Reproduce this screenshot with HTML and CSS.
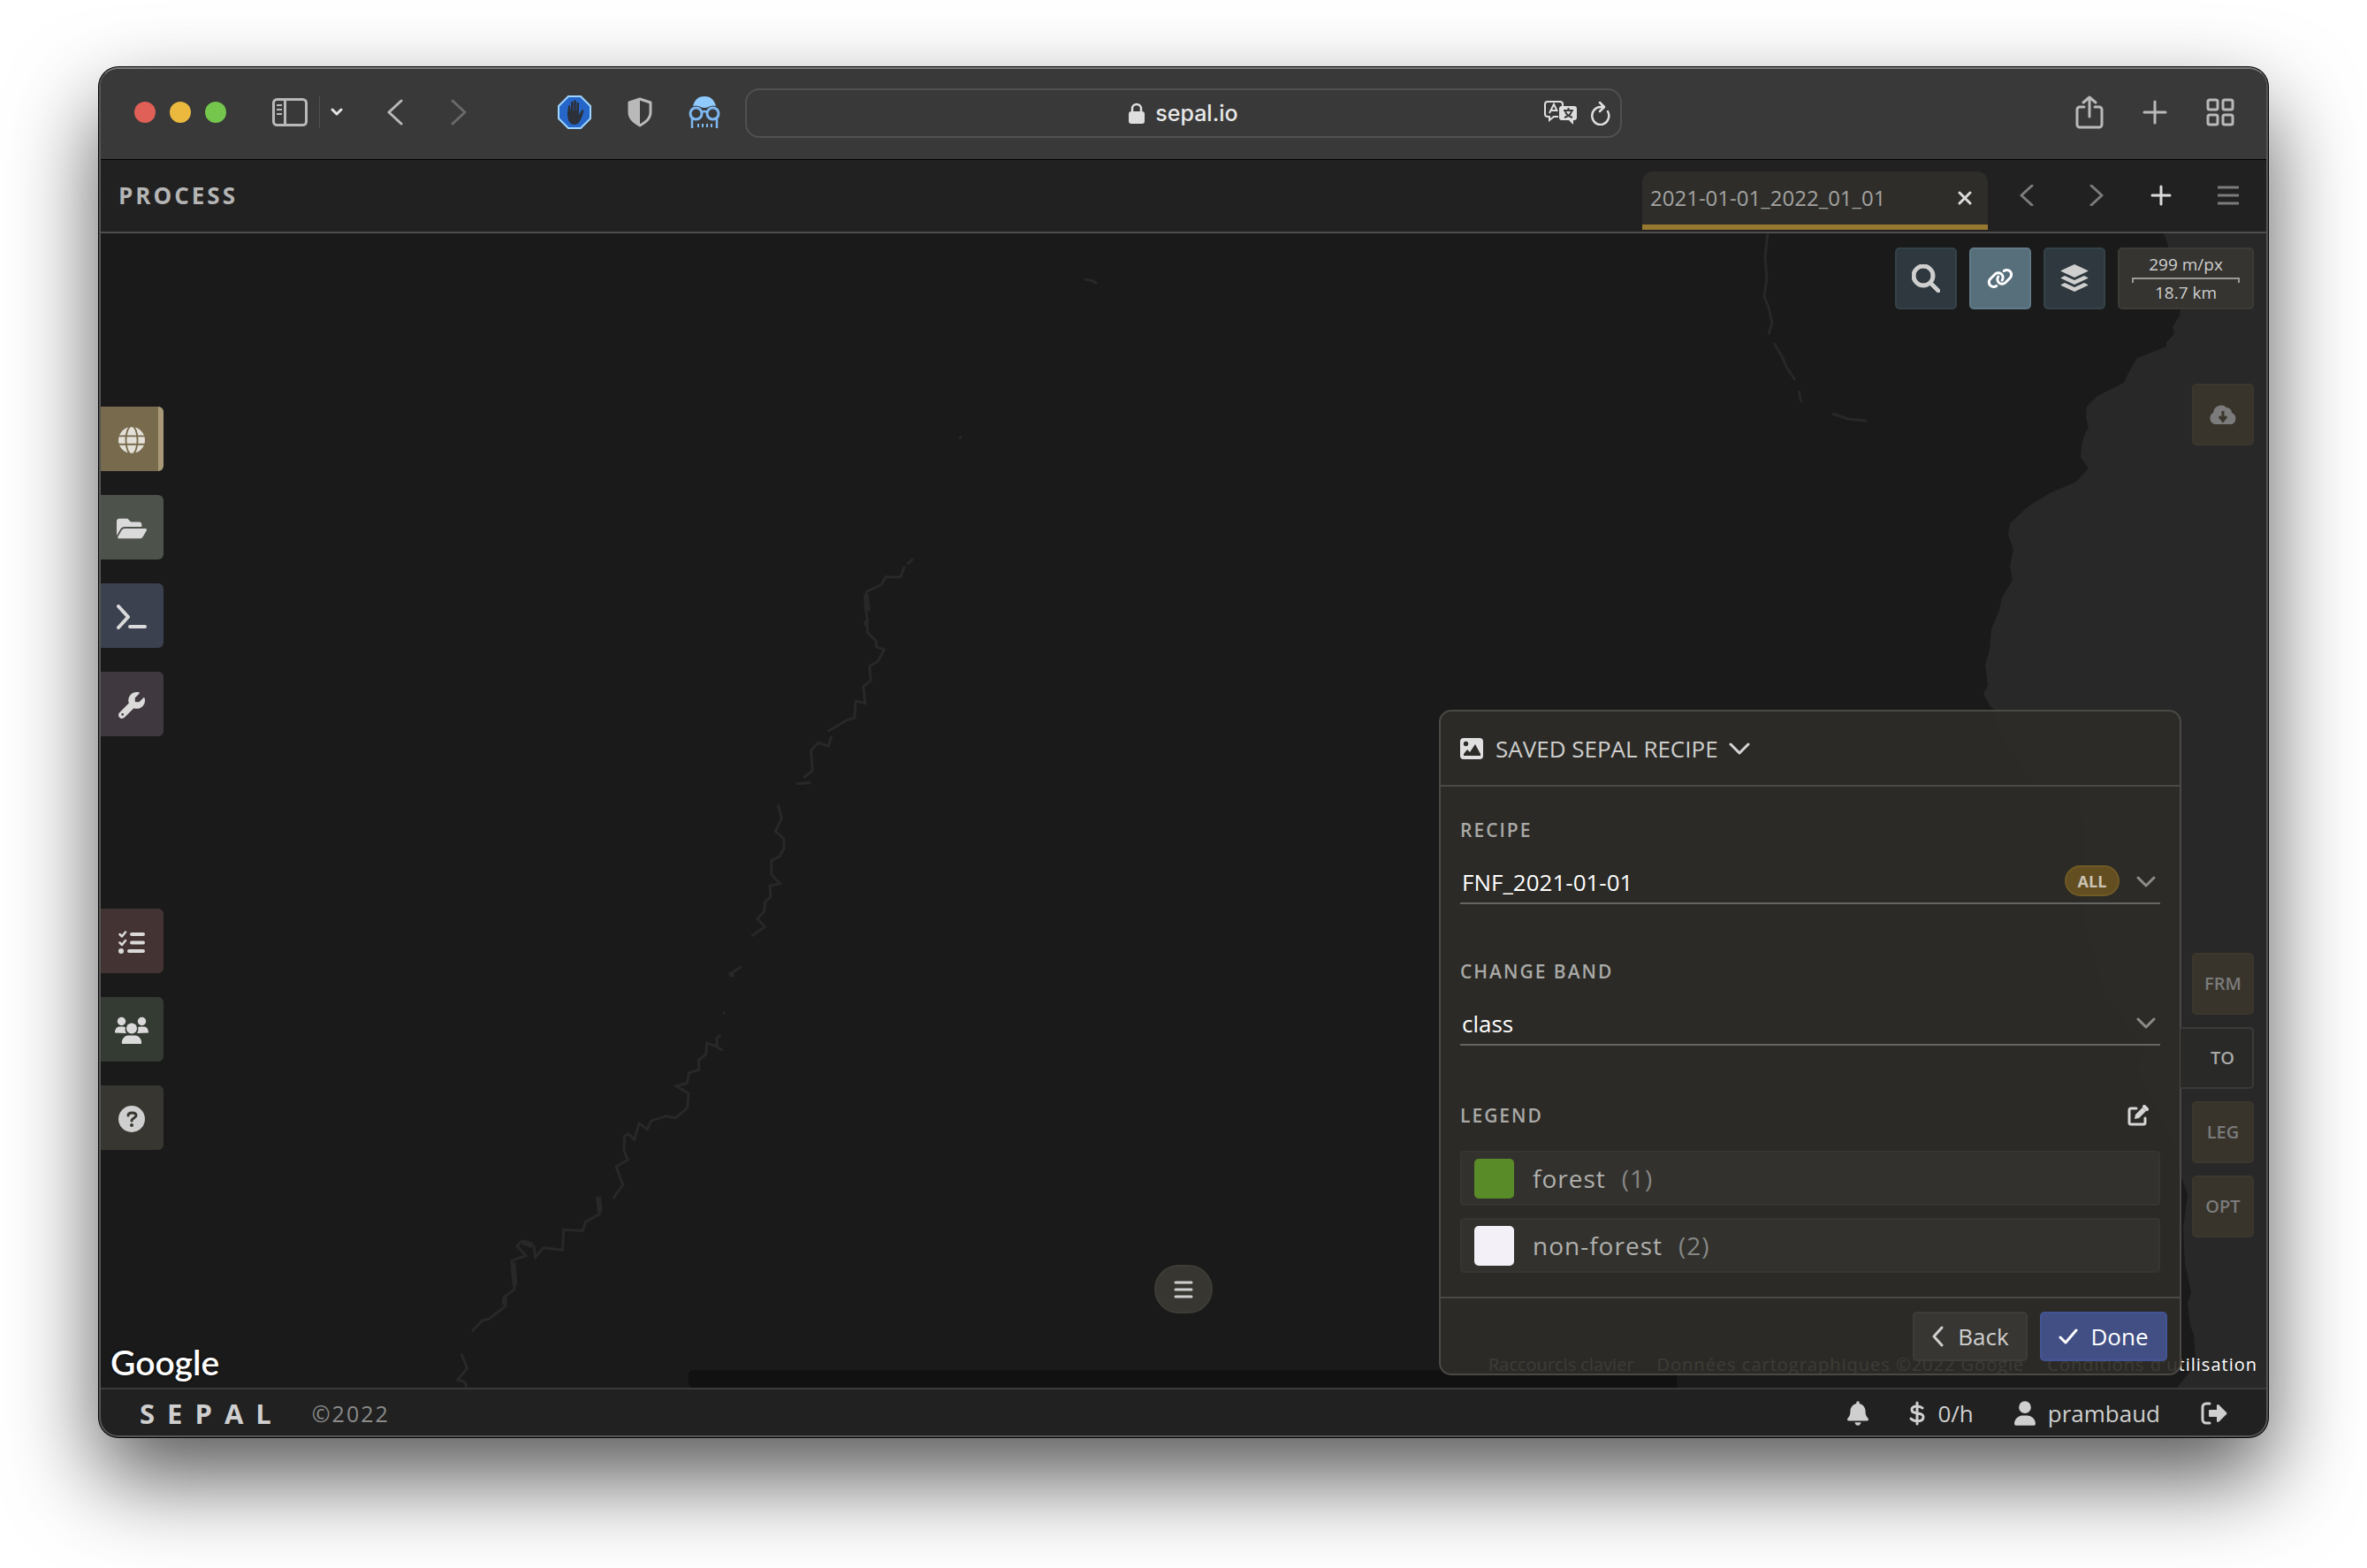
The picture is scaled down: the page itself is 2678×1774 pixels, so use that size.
FILE: index.html
```html
<!DOCTYPE html>
<html lang="fr">
<head>
<meta charset="utf-8">
<meta name="viewport" content="width=device-width, initial-scale=1">
<title>SEPAL</title>
<link rel="stylesheet" href="styles.css">
</head>
<body>
<div class="window">
  <header class="toolbar">
    <div class="toolbar-side">
      <div class="lights"><i class="light red"></i><i class="light yellow"></i><i class="light green"></i></div>
      <button class="plain sidebar-toggle" aria-label="Sidebar"><svg width="40" height="32" viewBox="0 0 40 32" fill="none" stroke="#b9b9b9" stroke-width="3"><rect x="1.500" y="1.500" width="37" height="29" rx="4"/><path d="M14.500 2v28"/><path d="M5 8h6M5 13h6M5 18h6" stroke-width="2"/></svg></button>
      <button class="plain sidebar-menu" aria-label="Sidebar menu"><svg width="14" height="10" viewBox="0 0 14 10" fill="none" stroke="#e4e4e4" stroke-width="3" stroke-linecap="round" stroke-linejoin="round"><path d="M2 2l5 5 5-5"/></svg></button>
      <button class="plain back" aria-label="Back"><svg width="18" height="30" viewBox="0 0 18 30" fill="none" stroke="#b9b9b9" stroke-width="3" stroke-linecap="round" stroke-linejoin="round"><path d="M16 2L2 15l14 13"/></svg></button>
      <button class="plain forward" aria-label="Forward"><svg width="18" height="30" viewBox="0 0 18 30" fill="none" stroke="#6a6a6a" stroke-width="3" stroke-linecap="round" stroke-linejoin="round"><path d="M2 2l14 13L2 28"/></svg></button>
      <button class="plain ext" aria-label="Ad blocker"><svg width="38" height="38" viewBox="0 0 38 38"><path d="M12 1h14l11 11v14L26 37H12L1 26V12z" fill="#2566c8" stroke="#9fd6ff" stroke-width="2"/><path d="M11 20l1-8a1 1 0 0 1 2 0l1 6V8a1.300 1.300 0 0 1 2.600 0v9h.6V6.500a1.300 1.300 0 0 1 2.600 0V17h.6V9a1.300 1.300 0 0 1 2.600 0v13l3-5a1.200 1.200 0 0 1 2.300 1c-2 6-4 15-10 15-6 0-8.300-5-8.300-13z" fill="#2c3038"/></svg></button>
      <button class="plain ext" aria-label="Privacy shield"><svg width="30" height="34" viewBox="0 0 30 34"><path d="M15 2l12 4v11c0 8-7 12-12 15C10 29 3 25 3 17V6z" fill="none" stroke="#b9b9b9" stroke-width="3" stroke-linejoin="round"/><path d="M15 2v30C10 29 3 25 3 17V6z" fill="#b9b9b9"/></svg></button>
      <button class="plain ext" aria-label="Spectacles"><svg width="36" height="38" viewBox="0 0 36 38" fill="none" stroke="#7db8f2" stroke-width="3"><path d="M5 12C7 4 12 1 18 1s11 3 13 11c-6-2-8 2-13 2s-7-4-13-2z" fill="#8fcbff" stroke="none"/><circle cx="8.500" cy="20.500" r="6.500"/><circle cx="27.500" cy="20.500" r="6.500"/><path d="M15 19q3-2 6 0M4 25v12M32 25v12" stroke-width="2.500"/><path d="M10 34h17" stroke-width="4" stroke-dasharray="2 3"/></svg></button>
    </div>
    <div class="address">
      <svg width="18" height="24" viewBox="0 0 18 24"><rect y="10" width="18" height="14" rx="3" fill="#dedede"/><path d="M4 11V7a5 5 0 0 1 10 0v4" fill="none" stroke="#dedede" stroke-width="2.500"/></svg>
      <span>sepal.io</span>
      <div class="address-tools">
        <button class="plain" aria-label="Translate"><svg width="38" height="28" viewBox="0 0 38 28" fill="none" stroke="#dedede" stroke-width="2"><path d="M16 18H11l-5 4v-4H4a3 3 0 0 1-3-3V4a3 3 0 0 1 3-3h14a3 3 0 0 1 3 3v2"/><path d="M6 14l5-10 4 8M8 11h6"/><path d="M20 6h14a3 3 0 0 1 3 3v10a3 3 0 0 1-3 3h-1v5l-5-5h-8a3 3 0 0 1-3-3V9a3 3 0 0 1 3-3z" fill="#dedede" stroke="none"/><path d="M22 11h11M27.500 8v3M24 12c1 4 5 6 8 7M31 12c-1 4-5 6-8 7" stroke="#393939"/></svg></button>
        <button class="plain" aria-label="Reload"><svg width="24" height="28" viewBox="0 0 24 28" fill="none" stroke="#dedede" stroke-width="2.500" stroke-linecap="round" stroke-linejoin="round"><path d="M20 12a9.500 10 0 1 1-8-5h3M11 2l5 5-5 5"/></svg></button>
      </div>
    </div>
    <div class="toolbar-side right">
      <button class="plain" aria-label="Share"><svg width="32" height="38" viewBox="0 0 32 38" fill="none" stroke="#b9b9b9" stroke-width="3" stroke-linecap="round" stroke-linejoin="round"><path d="M10 13H5a3 3 0 0 0-3 3v17a3 3 0 0 0 3 3h22a3 3 0 0 0 3-3V16a3 3 0 0 0-3-3h-5M16 24V2M9 8l7-6 7 6"/></svg></button>
      <button class="plain" aria-label="New tab"><svg width="28" height="28" viewBox="0 0 28 28" stroke="#b9b9b9" stroke-width="3" stroke-linecap="round"><path d="M14 2v24M2 14h24"/></svg></button>
      <button class="plain" aria-label="Tab overview"><svg width="32" height="32" viewBox="0 0 32 32" fill="none" stroke="#b9b9b9" stroke-width="3"><rect x="2" y="2" width="11" height="11" rx="2"/><rect x="19" y="2" width="11" height="11" rx="2"/><rect x="2" y="19" width="11" height="11" rx="2"/><rect x="19" y="19" width="11" height="11" rx="2"/></svg></button>
    </div>
  </header>

  <div class="process-bar">
    <h1 class="process-title">PROCESS</h1>
    <div class="tab"><span>2021-01-01_2022_01_01</span><button class="plain" aria-label="Close tab"><svg width="16" height="16" viewBox="0 0 16 16" stroke="#dcdcdc" stroke-width="3" stroke-linecap="round"><path d="M2 2l12 12M14 2L2 14"/></svg></button></div>
    <div class="tab-tools">
      <button class="plain" aria-label="Previous"><svg width="24" height="24" viewBox="0 0 24 24" fill="none" stroke="#7b7b7b" stroke-width="3" stroke-linecap="round" stroke-linejoin="round"><path d="M18 1L6 12l12 11"/></svg></button>
      <button class="plain" aria-label="Next"><svg width="24" height="24" viewBox="0 0 24 24" fill="none" stroke="#7b7b7b" stroke-width="3" stroke-linecap="round" stroke-linejoin="round"><path d="M9 1l12 11L9 23"/></svg></button>
      <button class="plain" aria-label="Add"><svg width="24" height="24" viewBox="0 0 24 24" stroke="#dcdcdc" stroke-width="3" stroke-linecap="round"><path d="M12 2v20M2 12h20"/></svg></button>
      <button class="plain" aria-label="Menu"><svg width="24" height="24" viewBox="0 0 24 24" stroke="#7b7b7b" stroke-width="3"><path d="M0 3h24M0 12h24M0 21h24"/></svg></button>
    </div>
  </div>

  <main class="map">
    <svg class="terrain" viewBox="114 264 2451 1306" preserveAspectRatio="xMaxYMax slice" aria-hidden="true">
      <path class="water" d="M2449 264L2454 278 2462 310 2460 330 2468 350 2467 357 2459 370 2461 378 2452 387V392L2419 405 2409 422 2404 433 2374 448 2362 460 2361 472 2364 483 2359 493 2356 503 2355 517 2364 530 2350 545 2320 558 2297 572 2275 592 2273 604 2279 622 2275 640 2278 656 2266 676 2263 690 2254 712 2252 735 2247 752 2250 775 2245 785 2252 798 2257 803V818L2300 885 2352 893 2360 950 2361 1050 2385 1130 2428 1185 2420 1210 2435 1240 2460 1290 2469 1332 2476 1352 2471 1390 2473 1430 2480 1462 2476 1475 2479 1500 2483 1510 2485 1537 2480 1550 2464 1570H2565V264z"/>
      <g class="river" transform="translate(450 580) scale(.4146 .6378)">
        <path d="M1408 82L1392 92M1386 95L1374 114H1334L1322 128 1282 140 1278 165 1284 190V212L1308 228V238L1330 243 1312 264 1290 272 1293 298 1273 308 1278 338 1252 334 1249 364 1228 368 1176 388M1186 396L1178 414 1150 408 1130 422 1134 458 1110 470M1090 481L1130 479M1040 518L1050 542 1033 565 1055 578 1057 595 1044 610 1022 617V642L1046 658 1018 662 1020 682 1005 690 1002 708 984 720 1004 735 968 751M940 805L906 820M890 887H896M884 926L873 932 874 948 890 954M873 947L846 941 844 960 823 972 825 988 797 994 792 1012 762 1017 796 1030 793 1056 760 1074 736 1070 694 1079 683 1094 661 1083 648 1112 632 1102 621 1106 620 1132 630 1148 598 1160 617 1192 590 1217M553 1213L554 1244 515 1258 507 1274 455 1272 452 1308 400 1304 378 1321 374 1302 358 1294 342 1292 328 1301 352 1318 313 1327 323 1360 320 1378 292 1392 296 1408 252 1430 234 1433 205 1452M176 1492L192 1518 166 1538 186 1542 190 1552"/>
        <path class="wide" d="M1280 145L1285 175M1275 196H1284M920 818L908 820M550 1214L554 1240M343 1294L370 1300M317 1330L322 1370M294 1393V1405"/>
      </g>
      <g class="river"><path d="M2001 264L1998 290 2000 315 1997 335 2002 348 2006 365 2002 378M2008 388L2018 405 2022 415 2032 430M2036 442L2039 455M2074 468L2092 474 2113 476M1228 316L1238 318 1242 321M1086 495h3"/></g>
      <path class="relief" d="M780 1556q0-6 6-6H1898V1570H786q-6 0-6-6z"/>
    </svg>

    <nav class="modules" aria-label="Modules">
      <div class="module-group">
        <button class="module process" aria-label="Process"><svg width="30" height="30" viewBox="0 0 32 32"><circle cx="16" cy="16" r="16" fill="#e3e0d8"/><g fill="none" stroke="#786a4c" stroke-width="2"><ellipse cx="16" cy="16" rx="7" ry="17"/><path d="M0 11h32M0 21h32"/></g></svg></button>
        <button class="module browse" aria-label="Files"><svg width="34" height="30" viewBox="0 32 576 448"><path fill="#dadada" d="M572.694 292.093L500.270 416.248A63.997 63.997 0 0 1 444.989 448H45.025c-18.523 0-30.064-20.093-20.731-36.093l72.424-124.155A64 64 0 0 1 152 256h399.964c18.523 0 30.064 20.093 20.730 36.093zM152 224h328v-48c0-26.510-21.490-48-48-48H272l-64-64H48C21.490 64 0 85.490 0 112v278.046l69.077-118.418C86.214 242.250 117.989 224 152 224z"/></svg></button>
        <button class="module terminal" aria-label="Terminal"><svg width="34" height="28" viewBox="0 0 34 28" fill="none" stroke="#dadada" stroke-width="4" stroke-linecap="round" stroke-linejoin="round"><path d="M2 2l11 12L2 26M15 25h17"/></svg></button>
        <button class="module apps" aria-label="Apps"><svg width="30" height="30" viewBox="0 0 512 512"><path fill="#dadada" d="M352 320c88.400 0 160-71.600 160-160c0-15.300-2.200-30.100-6.200-44.200c-3.100-10.800-16.400-13.200-24.300-5.300l-76.800 76.800c-3 3-7.100 4.700-11.300 4.700H336c-8.800 0-16-7.200-16-16V118.600c0-4.200 1.700-8.300 4.700-11.300l76.800-76.800c7.900-7.900 5.400-21.200-5.300-24.300C382.100 2.200 367.300 0 352 0C263.600 0 192 71.600 192 160c0 19.100 3.400 37.500 9.500 54.500L19.900 396.100C7.200 408.800 0 426.100 0 444.100C0 481.600 30.400 512 67.900 512c18 0 35.300-7.200 48-19.900L297.500 310.500c17 6.200 35.400 9.500 54.500 9.500zM80 408a24 24 0 1 1 0 48 24 24 0 1 1 0-48z"/></svg></button>
      </div>
      <div class="module-group">
        <button class="module tasks" aria-label="Tasks"><svg width="30" height="26" viewBox="0 0 30 26" fill="none" stroke="#dadada" stroke-linecap="round" stroke-linejoin="round"><path d="M15 4h13M15 13.500h13M12 23h16" stroke-width="4"/><path d="M1.500 4l2.500 2.500L8 1.500M1.500 13.500l2.500 2.500 4-5" stroke-width="2.500"/><circle cx="3" cy="23" r="3" fill="#dadada" stroke="none"/></svg></button>
        <button class="module users" aria-label="Users"><svg width="38" height="32" viewBox="0 0 38 32" fill="#dadada"><circle cx="7.500" cy="5.500" r="4.700"/><circle cx="30.500" cy="5.500" r="4.700"/><circle cx="19" cy="13.500" r="6"/><path d="M0 18.500c0-4 2-7 5-7h5l2 1c-1 3 0 5 1 6.500zM38 18.500c0-4-2-7-5-7h-5l-2 1c1 3 0 5-1 6.500zM8 31c-1-5 3-9.500 7-9.500h8c4 0 8 4.500 7 9.500z"/></svg></button>
        <button class="module help" aria-label="Help"><svg width="30" height="30" viewBox="0 0 30 30"><circle cx="15" cy="15" r="15" fill="#cfcfcf"/><path d="M11 11c0-4 9-4 9 0 0 3-5 3-5 6" fill="none" stroke="#373630" stroke-width="3" stroke-linecap="round"/><circle cx="15" cy="22" r="2" fill="#373630"/></svg></button>
      </div>
    </nav>

    <div class="map-tools">
      <button class="tile blue" aria-label="Search"><svg width="32" height="32" viewBox="0 0 512 512"><path fill="#cfcfcf" stroke="#cfcfcf" stroke-width="16" d="M416 208c0 45.900-14.900 88.300-40 122.700L502.600 457.400c12.500 12.500 12.500 32.800 0 45.300s-32.800 12.500-45.300 0L330.700 376c-34.400 25.200-76.800 40-122.700 40C93.100 416 0 322.900 0 208S93.100 0 208 0S416 93.100 416 208zM208 352a144 144 0 1 0 0-288 144 144 0 1 0 0 288z"/></svg></button>
      <button class="tile blue on" aria-label="Link maps"><svg width="30" height="24" viewBox="0 0 640 512"><path fill="#fff" d="M579.800 267.700c56.500-56.500 56.500-148 0-204.500c-50-50-128.800-56.500-186.300-15.400l-1.600 1.100c-14.400 10.300-17.700 30.300-7.400 44.600s30.300 17.700 44.600 7.400l1.600-1.100c32.100-22.900 76-19.300 103.800 8.600c31.500 31.500 31.500 82.500 0 114L422.300 334.800c-31.500 31.500-82.500 31.500-114 0c-27.900-27.900-31.500-71.800-8.600-103.800l1.100-1.600c10.300-14.400 6.900-34.400-7.400-44.600s-34.400-6.900-44.600 7.400l-1.100 1.600C206.500 251.200 213 330 263 380c56.500 56.500 148 56.500 204.500 0L579.800 267.700zM60.200 244.300c-56.500 56.500-56.500 148 0 204.500c50 50 128.800 56.500 186.300 15.400l1.600-1.100c14.400-10.300 17.700-30.300 7.400-44.600s-30.300-17.700-44.600-7.400l-1.600 1.100c-32.100 22.900-76 19.300-103.800-8.600C74 372 74 321 105.500 289.500L217.700 177.200c31.500-31.500 82.500-31.500 114 0c27.900 27.900 31.500 71.800 8.600 103.900l-1.100 1.600c-10.300 14.400-6.900 34.400 7.400 44.600s34.400 6.900 44.600-7.400l1.100-1.600C433.500 260.800 427 182 377 132c-56.500-56.500-148-56.500-204.500 0L60.200 244.300z"/></svg></button>
      <button class="tile blue" aria-label="Layers"><svg width="32" height="32" viewBox="0 0 32 32" fill="#cfcfcf"><path d="M16 0l15 7q1 1 0 1l-15 7L1 8q-1 0 0-1z"/><path d="M16 18l11-5 4 2q1 1 0 1l-15 7L1 16q-1 0 0-1l4-2z"/><path d="M16 26l11-5 4 2q1 1 0 1l-15 7L1 24q-1 0 0-1l4-2z"/></svg></button>
      <div class="scale"><span>299 m/px</span><i class="scale-line"></i><span>18.7 km</span></div>
    </div>
    <button class="tile brown retrieve" aria-label="Retrieve"><svg width="32" height="24" viewBox="0 0 32 24"><path d="M7 23a7 7 0 0 1-2-13A9 9 0 0 1 20 4a6 6 0 0 1 6 6 7 7 0 0 1 0 13z" fill="#7b7b7b"/><path d="M16 8v10M12 14l4 5 4-5" fill="none" stroke="#3a352d" stroke-width="3"/></svg></button>

    <div class="google">Google</div>
    <div class="attribution"><a href="#">Raccourcis clavier</a><span class="spaced">Données cartographiques ©2022 Google</span><a class="spaced" href="#">Conditions d'utilisation</a></div>
    <button class="pill-menu" aria-label="Map menu"><svg width="22" height="20" viewBox="0 0 22 20" stroke="#cfcfcf" stroke-width="3" stroke-linecap="round"><path d="M2 2h18M2 10h18M2 18h18"/></svg></button>

    <section class="panel">
      <header class="panel-head">
        <svg width="26" height="24" viewBox="0 0 26 24"><rect width="26" height="24" rx="4" fill="#e0e0e0"/><circle cx="6.500" cy="6.500" r="2.700" fill="#2c2b27"/><path d="M4 20v-2l4-5 3 3 6-9 6 11v2z" fill="#2c2b27"/></svg>
        <button class="plain panel-title">SAVED SEPAL RECIPE<svg width="24" height="14" viewBox="0 0 24 14" fill="none" stroke="#d6d6d6" stroke-width="3" stroke-linecap="round" stroke-linejoin="round"><path d="M2 2l10 10L22 2"/></svg></button>
      </header>
      <div class="panel-body">
        <div class="field">
          <label for="recipe">RECIPE</label>
          <div class="control"><select id="recipe"><option>FNF_2021-01-01</option></select><button class="badge">ALL</button><svg width="22" height="14" viewBox="0 0 22 14" fill="none" stroke="#8b8b89" stroke-width="3" stroke-linecap="round" stroke-linejoin="round"><path d="M2 3l9 9 9-9"/></svg></div>
        </div>
        <div class="field">
          <label for="band">CHANGE BAND</label>
          <div class="control"><select id="band"><option>class</option></select><svg width="22" height="14" viewBox="0 0 22 14" fill="none" stroke="#8b8b89" stroke-width="3" stroke-linecap="round" stroke-linejoin="round"><path d="M2 3l9 9 9-9"/></svg></div>
        </div>
        <div class="legend">
          <div class="legend-head"><h2>LEGEND</h2><button class="plain" aria-label="Edit legend"><svg width="24" height="24" viewBox="0 0 24 24" fill="none" stroke="#d6d6d6" stroke-width="3" stroke-linecap="round"><path d="M10 4H4a2 2 0 0 0-2 2v14a2 2 0 0 0 2 2h14a2 2 0 0 0 2-2v-5"/><path d="M8 16l1-5 8-8 4 4-8 8z" fill="#d6d6d6" stroke="none"/><path d="M19 2l3 3" stroke-width="4"/></svg></button></div>
          <ul>
            <li><i class="swatch forest"></i><span>forest</span><span class="num">(1)</span></li>
            <li><i class="swatch nonforest"></i><span>non-forest</span><span class="num">(2)</span></li>
          </ul>
        </div>
      </div>
      <footer class="panel-foot">
        <button class="btn"><svg width="16" height="24" viewBox="0 0 16 24" fill="none" stroke="#cfcfcf" stroke-width="3" stroke-linecap="round" stroke-linejoin="round"><path d="M12 2L3 12l9 10"/></svg>Back</button>
        <button class="btn primary"><svg width="22" height="18" viewBox="0 0 22 18" fill="none" stroke="#fff" stroke-width="3" stroke-linecap="round" stroke-linejoin="round"><path d="M2 10l6 6L20 2"/></svg>Done</button>
      </footer>
    </section>
    <div class="steps">
      <button class="tile brown">FRM</button>
      <button class="tile current">TO</button>
      <button class="tile brown">LEG</button>
      <button class="tile brown">OPT</button>
    </div>
  </main>

  <footer class="status">
    <strong class="brand">SEPAL</strong><span class="copyright">©2022</span>
    <div class="status-tools">
      <button class="plain" aria-label="Notifications"><svg width="24" height="28" viewBox="0 0 448 512"><path fill="#cfcfcf" d="M224 0c-17.700 0-32 14.300-32 32V51.200C119 66 64 130.600 64 208v18.800c0 47-17.300 92.400-48.500 127.600l-7.400 8.300c-8.400 9.400-10.400 22.900-5.300 34.400S19.400 416 32 416H416c12.600 0 24-7.400 29.200-18.900s3.100-25-5.300-34.400l-7.400-8.300C401.300 319.200 384 273.900 384 226.800V208c0-77.400-55-142-128-156.800V32c0-17.700-14.300-32-32-32zm45.300 493.300c12-12 18.700-28.300 18.700-45.300H224 160c0 17 6.700 33.300 18.700 45.300s28.300 18.700 45.300 18.700s33.300-6.700 45.300-18.700z"/></svg></button>
      <button class="plain budget"><svg width="18" height="28" viewBox="0 0 18 28" fill="none" stroke="#cfcfcf" stroke-width="3" stroke-linecap="round"><path d="M9 2v24M15 8c-3-3-12-3-12 2 0 6 13 2 13 8 0 6-10 6-14 2"/></svg>0/h</button>
      <button class="plain user"><svg width="24" height="28" viewBox="0 0 448 512"><path fill="#cfcfcf" d="M224 256A128 128 0 1 0 224 0a128 128 0 1 0 0 256zm-45.700 48C79.800 304 0 383.800 0 482.300C0 498.700 13.300 512 29.700 512H418.300c16.400 0 29.700-13.300 29.700-29.700C448 383.800 368.200 304 269.700 304H178.300z"/></svg>prambaud</button>
      <button class="plain" aria-label="Log out"><svg width="30" height="26" viewBox="0 0 30 26"><path d="M10 2H6a4 4 0 0 0-4 4v14a4 4 0 0 0 4 4h4" fill="none" stroke="#cfcfcf" stroke-width="3" stroke-linecap="round"/><path d="M10 9h8V4q1-2 3 0l8 8q1 1 0 2l-8 8q-2 2-3 0v-5h-8q-1 0-1-1v-6q0-1 1-1z" fill="#cfcfcf"/></svg></button>
    </div>
  </footer>
</div>
</body>
</html>
```
FILE: styles.css
```css
* { box-sizing: border-box; }
body {
  margin: 0;
  padding: 76px 112px 148px;
  background: #fff;
  color: #cfcfcf;
  font-family: "Open Sans", "Noto Sans", sans-serif;
  font-size: 26px;
  line-height: 32px;
}
svg { display: block; flex: none; }
button, select { font: inherit; color: inherit; margin: 0; }
h1, h2, ul { margin: 0; padding: 0; list-style: none; }
.plain { display: flex; align-items: center; padding: 0; border: 0; background: none; }

.window {
  display: flex;
  flex-direction: column;
  min-height: calc(100vh - 224px);
  overflow: hidden;
  border: 2px solid #555;
  border-top-color: #7c7c7c;
  border-radius: 22px;
  background: #212121;
  box-shadow: 0 0 0 1px #000, 0 46px 100px rgba(0, 0, 0, .66);
}

/* browser toolbar */
.toolbar {
  display: grid;
  grid-template-columns: 729px minmax(300px, 992px) 1fr;
  height: 103px;
  padding-bottom: 2px;
  align-items: center;
  background: #393939;
  border-bottom: 1px solid #000;
}
.toolbar-side { display: flex; align-items: center; padding-bottom: 2px; }
.lights { display: flex; gap: 16px; margin-left: 38px; }
.light { width: 24px; height: 24px; border-radius: 50%; }
.red { background: #e05f57; }
.yellow { background: #ecb93f; }
.green { background: #74c74c; }
.sidebar-toggle { margin-left: 52px; }
.sidebar-menu { margin-left: 13px; padding-left: 12px; height: 36px; border-left: 1px solid #505050; }
.back { margin-left: 50px; }
.forward { margin-left: 54px; }
.ext { margin-left: 40px; }
.forward + .ext { margin-left: 103px; }
.address {
  position: relative;
  display: flex;
  align-items: center;
  justify-content: center;
  gap: 12px;
  height: 56px;
  border: 2px solid #505050;
  border-radius: 16px;
  color: #e8e8e8;
  font-family: Inter, "Open Sans", sans-serif;
  font-size: 25px;
  font-weight: 500;
}
.address-tools { position: absolute; right: 10px; display: flex; gap: 14px; }
.right { justify-content: flex-end; gap: 44px; padding-right: 36px; }

/* process bar */
.process-bar {
  display: flex;
  align-items: center;
  height: 83px;
  border-bottom: 2px solid #4e4e4e;
}
.process-title { flex: 1; margin-left: 20px; padding-bottom: 2px; font-size: 26px; font-weight: 700; letter-spacing: 3px; color: #b5b5b5; }
.tab {
  display: flex;
  align-items: center;
  justify-content: space-between;
  align-self: flex-end;
  width: 391px;
  height: 66px;
  margin-bottom: 2px;
  padding: 0 18px 0 9px;
  border-bottom: 6px solid #967830;
  border-radius: 12px 12px 0 0;
  background: #2e2d2a;
  font-size: 24px;
  font-weight: 500;
  color: #a3a3a1;
}
.tab-tools { display: flex; gap: 52px; padding: 0 31px 2px 32px; }

/* map */
.map { position: relative; flex: 1; min-height: 1200px; background: #1a1a1a; }
.terrain { position: absolute; inset: 0; width: 100%; height: 100%; }
.water { fill: #282828; }
.relief { fill: #111; }
.river path { fill: none; stroke: #282828; stroke-width: 3; vector-effect: non-scaling-stroke; }
.river .wide { stroke-width: 6; }
.modules {
  position: absolute;
  inset: 0 auto 0 0;
  display: flex;
  flex-direction: column;
  justify-content: space-between;
  padding: 196px 0 269px;
}
.module-group { display: flex; flex-direction: column; gap: 27px; }
.module {
  display: flex;
  align-items: center;
  justify-content: center;
  width: 71px;
  height: 73px;
  padding: 2px 2px 0 0;
  border: 0;
  border-radius: 0 6px 6px 0;
}
.process { background: #786a4c; padding: 2px 0 0 4px; border-right: 6px solid #a99978; }
.browse { background: #4d524b; }
.terminal { background: #3c4150; }
.apps { background: #40383f; }
.tasks { background: #433433; }
.users { background: #343b33; }
.help { background: #373630; }

.tile {
  display: flex;
  align-items: center;
  justify-content: center;
  width: 70px;
  height: 70px;
  padding: 0;
  border: 2px solid;
  border-radius: 5px;
  font-size: 20px;
  font-weight: 600;
}
.blue { background: #2e383e; border-color: #34424a; }
.blue.on { background: #576e7b; border-color: #607a88; }
.brown { background: #38342c; border-color: #3b372c; color: #7b7b7b; }
.map-tools { position: absolute; top: 16px; right: 14px; display: flex; gap: 14px; }
.scale {
  display: flex;
  flex-direction: column;
  width: 154px;
  height: 70px;
  padding: 4px 14px;
  border: 2px solid #3c3b36;
  border-radius: 5px;
  background: #353430;
  font-size: 19px;
  line-height: 26px;
  text-align: center;
}
.scale-line { height: 8px; margin: 2px 0 -2px; border: 2px solid #999; border-width: 2px 2px 0; }
.retrieve { position: absolute; top: 170px; right: 14px; }
.google {
  position: absolute;
  left: 11px;
  bottom: 6px;
  color: #fff;
  font: 600 39px/46px Lato, sans-serif;
  text-shadow: 0 0 3px #000;
}
.attribution {
  position: absolute;
  right: 10px;
  bottom: 12px;
  display: flex;
  gap: 26px;
  color: #fff;
  font-size: 20px;
  line-height: 28px;
}
.attribution a { color: inherit; text-decoration: none; }
.spaced { letter-spacing: 1px; }
.pill-menu {
  position: absolute;
  left: 50%;
  bottom: 84px;
  display: flex;
  align-items: center;
  justify-content: center;
  width: 66px;
  height: 55px;
  margin-left: -33px;
  padding: 0;
  border: 2px solid #3d3c36;
  border-radius: 28px;
  background: #373630;
}

/* recipe panel */
.panel {
  position: absolute;
  right: 96px;
  bottom: 14px;
  width: 840px;
  border: 2px solid #4a4946;
  border-radius: 14px;
  background: rgba(45, 44, 40, .93);
}
.panel-head {
  display: flex;
  align-items: center;
  gap: 14px;
  height: 85px;
  padding: 0 22px;
  border-bottom: 2px solid #4a4946;
}
.panel-title { gap: 12px; font-size: 26px; }
.panel-body { display: flex; flex-direction: column; padding: 34px 22px 27px; }
.field { display: flex; flex-direction: column; height: 160px; }
.field label, .legend h2 { font-size: 21px; font-weight: 600; line-height: 30px; letter-spacing: 2px; color: #a9a9a7; }
.control {
  display: flex;
  align-items: center;
  height: 52px;
  margin-top: 17px;
  padding: 1px 5px 0 2px;
  border-bottom: 2px solid #656563;
}
.control select {
  flex: 1;
  height: 48px;
  padding: 2px 0 0;
  border: 0;
  appearance: none;
  background: none;
  color: #fff;
  font-size: 26px;
}
.badge {
  height: 35px;
  width: 62px;
  margin-right: 19px;
  padding: 0;
  border: 2px solid #705a26;
  border-radius: 18px;
  background: #634e22;
  color: #cbc4b4;
  font-size: 18px;
  font-weight: 700;
  line-height: 28px;
}
.legend-head { display: flex; align-items: center; justify-content: space-between; height: 36px; padding-right: 13px; }
.legend ul { display: flex; flex-direction: column; gap: 14px; margin-top: 22px; }
.legend li {
  display: flex;
  align-items: center;
  height: 62px;
  padding-left: 14px;
  border: 2px solid #363531;
  border-radius: 4px;
  background: #32312d;
  color: #b0b0ae;
  font-size: 28px;
  letter-spacing: 1px;
}
.swatch { width: 45px; height: 45px; margin-right: 21px; border-radius: 5px; }
.forest { background: #598b29; }
.nonforest { background: #f4f0f7; }
.num { margin-left: 18px; color: #868684; }
.panel-foot {
  display: flex;
  justify-content: flex-end;
  gap: 14px;
  padding: 15px 14px 14px;
  border-top: 2px solid #4a4946;
}
.btn {
  display: flex;
  align-items: center;
  justify-content: center;
  gap: 14px;
  width: 130px;
  height: 56px;
  padding: 0;
  border: 2px solid #3d3c38;
  border-radius: 5px;
  background: #373632;
  font-size: 26px;
}
.primary { width: 144px; border-color: #435494; background: #414f85; color: #fff; }
.steps { position: absolute; right: 14px; bottom: 170px; display: flex; flex-direction: column; align-items: flex-end; gap: 14px; }
.current { width: 83px; padding-left: 14px; border-color: #3a3a38; border-left: 0; border-radius: 0 5px 5px 0; background: #292927; color: #a9a9a7; }

/* status bar */
.status { display: flex; align-items: center; height: 54px; padding-top: 2px; border-top: 2px solid #3a3a3a; }
.brand { margin-left: 44px; font-size: 31px; letter-spacing: 14px; }
.copyright { margin-left: 32px; color: #8a8a8a; font-size: 25px; letter-spacing: 2px; }
.status-tools { display: flex; align-items: center; gap: 46px; margin-left: auto; padding-right: 44px; }
.budget, .user { gap: 14px; }
```
